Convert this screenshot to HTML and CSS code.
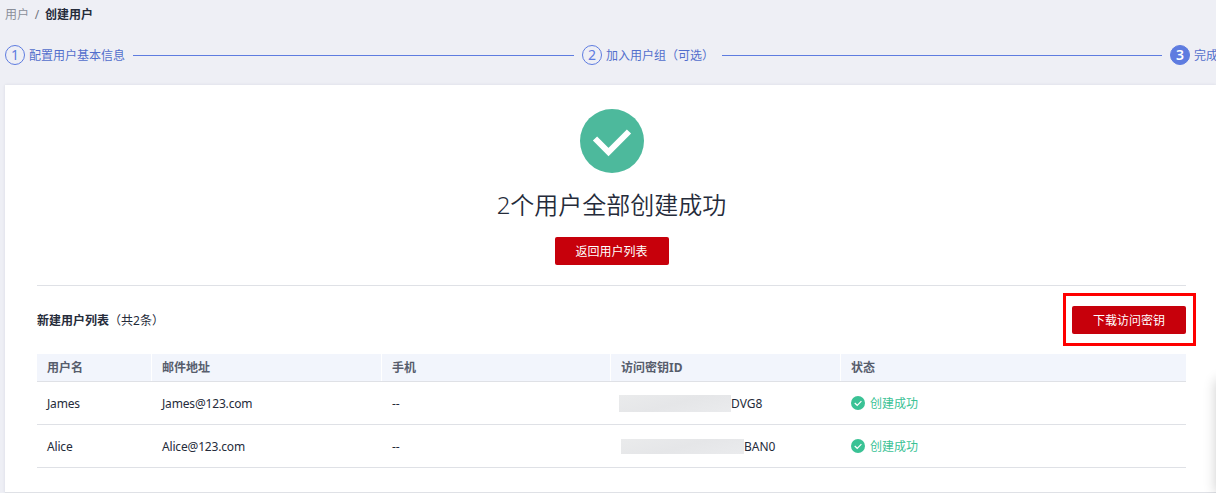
FILE: index.html
```html
<!DOCTYPE html>
<html lang="zh-CN">
<head>
<meta charset="utf-8">
<title>创建用户</title>
<link rel="stylesheet" href="styles.css">
</head>
<body>
<nav class="crumbs"><span class="crumb">用户</span><span class="slash">/</span><span class="current">创建用户</span></nav>
<div class="steps">
  <span class="num">1</span><span class="step step-first">配置用户基本信息</span>
  <span class="line line-first"></span>
  <span class="num">2</span><span class="step step-second">加入用户组（可选）</span>
  <span class="line line-second"></span>
  <span class="num active">3</span><span class="step">完成</span>
</div>
<main class="card">
  <section class="result">
    <svg class="big-check" viewBox="0 0 64 64"><circle cx="32" cy="32" r="32" fill="#4db99c"/><path d="M15 29.5L28.5 43L49 22.5" fill="none" stroke="#fff" stroke-width="6"/></svg>
    <h1 class="title">2个用户全部创建成功</h1>
    <button class="btn">返回用户列表</button>
  </section>
  <div class="list-head">
    <div class="list-title"><b>新建用户列表</b>（共2条）</div>
    <div class="highlight"><button class="btn">下载访问密钥</button></div>
  </div>
  <div class="table">
    <div class="row head"><div class="cell">用户名</div><div class="cell">邮件地址</div><div class="cell">手机</div><div class="cell">访问密钥ID</div><div class="cell">状态</div></div>
    <div class="row"><div class="cell text">James</div><div class="cell text">James@123.com</div><div class="cell text">--</div><div class="cell key"><span class="mask mask-a"></span><span class="text">DVG8</span></div>
      <div class="cell status"><svg class="check" viewBox="0 0 14 14"><circle cx="7" cy="7" r="7" fill="#3ac295"/><path d="M3.7 7L6.2 9.3L10.4 5.1" fill="none" stroke="#fff" stroke-width="1.2"/></svg><span class="text">创建成功</span></div></div>
    <div class="row"><div class="cell text">Alice</div><div class="cell text">Alice@123.com</div><div class="cell text">--</div><div class="cell key"><span class="mask mask-b"></span><span class="text">BAN0</span></div>
      <div class="cell status"><svg class="check" viewBox="0 0 14 14"><circle cx="7" cy="7" r="7" fill="#3ac295"/><path d="M3.7 7L6.2 9.3L10.4 5.1" fill="none" stroke="#fff" stroke-width="1.2"/></svg><span class="text">创建成功</span></div></div>
  </div>
</main>
<div class="side-shadow"></div>
</body>
</html>
```
FILE: styles.css
```css
* { box-sizing: border-box; }
html { overflow: hidden; }
body {
  margin: 0;
  height: 493px;
  overflow: hidden;
  position: relative;
  background: #eeeff5;
  color: #252b3a;
  font: 12px/18px "Noto Sans", "Noto Sans CJK SC", sans-serif;
}
.crumbs { display: flex; height: 45px; padding: 6px 0 0 5px; }
.crumb { color: #8a8e99; }
.slash { width: 16px; text-align: center; color: #71757f; }
.current { font-weight: 700; }
.steps {
  display: flex;
  align-items: center;
  height: 20px;
  padding-left: 5px;
  color: #526ecc;
  white-space: nowrap;
}
.num {
  flex: none;
  width: 20px;
  height: 20px;
  margin-right: 4px;
  border: 1px solid #5e7ce0;
  border-radius: 50%;
  font-size: 14px;
  line-height: 18px;
  text-align: center;
  color: #5e7ce0;
}
.num.active { background: #5e7ce0; color: #fff; font-weight: 600; }
.step { flex: none; padding-top: 2px; line-height: 20px; }
.step-first { width: 104px; }
.step-second { width: 116px; }
.line { flex: none; height: 1px; background: #5e7ce0; }
.line-first { width: 441px; margin-right: 8px; }
.line-second { width: 440px; margin-right: 8px; }
.card {
  height: 408px;
  margin: 20px 0 0 5px;
  padding: 0 30px 0 32px;
  background: #fff;
  border-bottom: 1px solid #dfe1e6;
  box-shadow: 0 0 3px rgba(40, 50, 80, .1);
}
.result {
  display: flex;
  flex-direction: column;
  align-items: center;
  height: 201px;
  padding-top: 24px;
  border-bottom: 1px solid #dfe1e6;
}
.big-check { width: 64px; height: 64px; flex: none; }
.title { margin: 14px 0 15px; font-size: 24px; font-weight: 350; line-height: 35px; }
.btn {
  width: 114px;
  height: 28px;
  padding: 2px 0 0;
  border: 0;
  border-radius: 2px;
  background: #c7000b;
  color: #fff;
  font: inherit;
}
.list-head { display: flex; justify-content: space-between; align-items: flex-start; height: 68px; padding-top: 7px; }
.list-title { padding-top: 19px; }
.highlight { margin-right: -10px; padding: 10px 7px 9px 6px; height: 53px; border: 3px solid #fe0000; }
.highlight .btn { display: block; }
.row {
  display: grid;
  grid-template-columns: 115px 230px 229px 230px 1fr;
  height: 43px;
  border-bottom: 1px solid #dfe1e6;
}
.cell { display: flex; align-items: center; padding-left: 10px; }
.text { padding-top: 2px; letter-spacing: -.17px; }
.head { height: 28px; background: #f2f5fc; color: #575d6c; font-weight: 700; }
.head .cell { border-right: 1px solid #fff; }
.head .cell:last-child { border-right: 0; }
.key { padding-left: 8px; }
.key .text { letter-spacing: 0; }
.mask { background: linear-gradient(165deg, #eaebec, #e5e6e8 50%, #eaebed); }
.mask-a { width: 112px; height: 17px; }
.mask-b { width: 123px; height: 15px; margin-left: 2px; }
.status { color: #3ac295; }
.status .text { letter-spacing: 0; }
.check { width: 14px; height: 14px; margin-right: 5px; }
.side-shadow {
  position: absolute;
  left: 1216px;
  top: 380px;
  width: 40px;
  height: 113px;
  box-shadow: 0 0 12px rgba(0, 0, 0, .2);
}
```
